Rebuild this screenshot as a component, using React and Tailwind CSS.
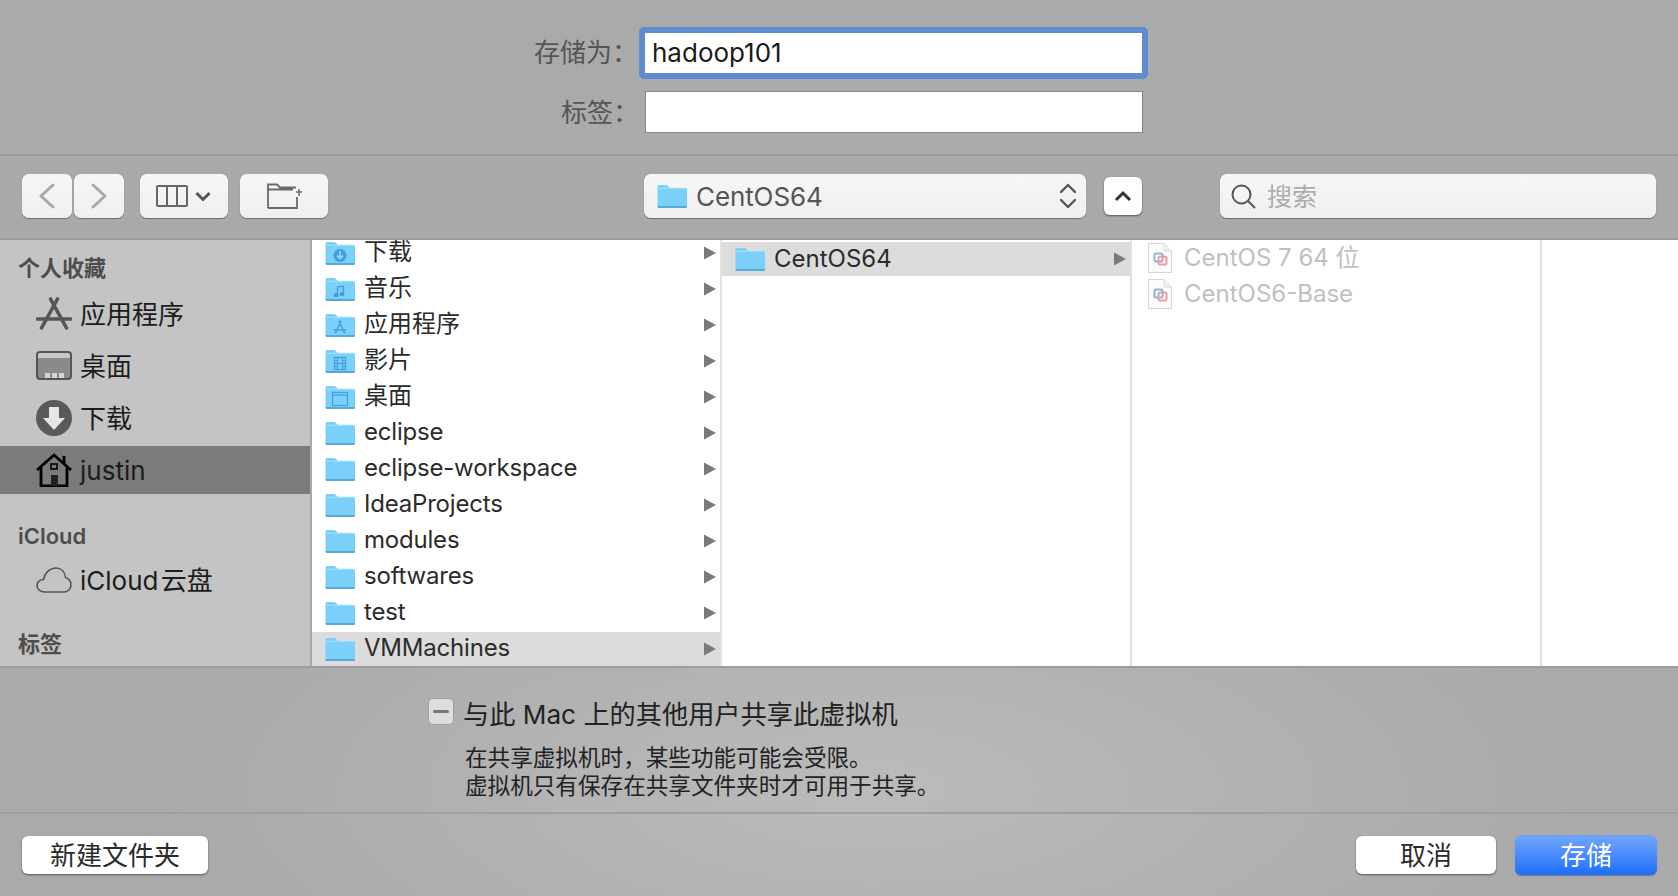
const col1 = [
  ["下载", "download"],
  ["音乐", "music"],
  ["应用程序", "apps"],
  ["影片", "film"],
  ["桌面", "window"],
  ["eclipse"],
  ["eclipse-workspace"],
  ["IdeaProjects"],
  ["modules"],
  ["softwares"],
  ["test"],
  ["VMMachines"],
];

const Glyph = ({ type }) => {
  const c = "#3f9fe0";
  if (type === "download")
    return (
      <g>
        <circle cx="15" cy="14.5" r="6.5" fill={c} />
        <path d="M15 10v7M12 14.5l3 3 3-3" stroke="#8fd6fb" strokeWidth="1.8" fill="none" />
      </g>
    );
  if (type === "music")
    return (
      <g fill="none" stroke={c} strokeWidth="1.4">
        <path d="M12.5 18v-8l6-1v8" />
        <ellipse cx="11" cy="18.2" rx="1.8" ry="1.4" fill={c} />
        <ellipse cx="17" cy="17.2" rx="1.8" ry="1.4" fill={c} />
      </g>
    );
  if (type === "apps")
    return (
      <g fill="none" stroke={c} strokeWidth="1.4" strokeLinecap="round">
        <path d="M14 8l5.500 12M16 8l-5.500 12M9 17h12" />
      </g>
    );
  if (type === "film")
    return (
      <g fill="none" stroke={c} strokeWidth="1.2">
        <rect x="9.5" y="8.5" width="11" height="12" />
        <path d="M12.5 8.5v12M17.5 8.5v12M12.5 14.5h5M9.5 11.5h3M9.5 14.5h3M9.5 17.5h3M17.5 11.5h3M17.5 14.5h3M17.5 17.5h3" />
      </g>
    );
  if (type === "window")
    return (
      <g fill="none" stroke={c} strokeWidth="1.2">
        <rect x="7.5" y="7.5" width="15" height="13" />
        <path d="M7.5 10h15" />
      </g>
    );
  return null;
};

const Folder = ({ glyph }) => (
  <svg width="30" height="24" viewBox="0 0 30 24" className="shrink-0">
    <path d="M0.5 3C0.5 1.5 1 1 2 1h7c1 0 1.5 .5 2.5 1.5S13 4 14 4h14.5c1 0 1.5 .5 1.5 1.5V21.5c0 1-.5 1.5-1.5 1.5H2c-1 0-1.5-.5-1.5-1.5z" fill="#7bd0fa" />
    <path d="M0.5 5.2C0.5 4.6 1 4.2 1.6 4.2H28.6c.8 0 1.4 .4 1.4 1.2" fill="none" stroke="#a9e1fc" strokeWidth="1" />
    <path d="M0.5 22h29.5v1c0 .5-.5 1-1.5 1H2c-1 0-1.5-.5-1.5-1z" fill="#57a9d6" />
    {glyph && <Glyph type={glyph} />}
  </svg>
);

const Arrow = () => (
  <svg width="12" height="14" viewBox="0 0 12 14" className="shrink-0">
    <path d="M0 0.5L12 7L0 13.5z" fill="#7a7a7a" />
  </svg>
);

const VmFile = () => (
  <svg width="24" height="30" viewBox="0 0 24 30" className="shrink-0">
    <path d="M0.5 0.5H16L23.5 8V29.5H0.5z" fill="#fbfbfb" stroke="#d6d6d6" />
    <path d="M16 0.5V8H23.5" fill="#eeeeee" stroke="#dedede" />
    <rect x="6.5" y="10.5" width="8" height="8" rx="1.5" fill="none" stroke="#8db4de" strokeWidth="2" />
    <rect x="10.5" y="13.5" width="8" height="8" rx="1.5" fill="none" stroke="#f59a9a" strokeWidth="2" />
  </svg>
);

const AppsIcon = () => (
  <svg width="36" height="34" viewBox="0 0 36 34" fill="none" stroke="#555555" strokeWidth="3.6" strokeLinecap="round">
    <path d="M14.500 2L30.500 31M21.500 2L5.500 31M1.500 22h33" />
  </svg>
);

const DesktopIcon = () => (
  <svg width="36" height="30" viewBox="0 0 36 30">
    <rect x="1" y="1" width="34" height="27" rx="3" fill="#8a8a8a" stroke="#555555" strokeWidth="2" />
    <path d="M2 7V4c0-1 1-2 2-2h28c1 0 2 1 2 2v3z" fill="#c8c8c8" />
    <rect x="9" y="22" width="5" height="5" fill="#d4d4d4" />
    <rect x="16" y="22" width="5" height="5" fill="#d4d4d4" />
    <rect x="23" y="22" width="5" height="5" fill="#d4d4d4" />
  </svg>
);

const DownloadIcon = () => (
  <svg width="36" height="36" viewBox="0 0 36 36">
    <circle cx="18" cy="18" r="18" fill="#5a5a5a" />
    <path d="M13 7h10v11h6L18 30 7 18h6z" fill="#e6e6e6" />
  </svg>
);

const HomeIcon = () => (
  <svg width="36" height="34" viewBox="0 0 36 34" fill="none" stroke="#000000" strokeWidth="2.8">
    <path d="M1 17L18 2l17 15" />
    <path d="M28 3v8" />
    <path d="M5 14v19h26V14" />
    <rect x="15" y="11" width="6" height="5" strokeWidth="1.6" />
    <rect x="15" y="22" width="7" height="11" fill="#222222" stroke="none" />
  </svg>
);

const CloudIcon = () => (
  <svg width="36" height="26" viewBox="0 0 36 26" fill="none" stroke="#555555" strokeWidth="1.6">
    <path d="M9 25C4 25 1 22 1 18.500C1 15 4 12.500 7.500 12.500C8.500 6 13.500 1 20 1C25.500 1 29 5 29.500 10.500C33 11.500 35 14.500 35 18C35 22 32 25 28 25z" />
  </svg>
);

const SideRow = ({ icon, label, active }) => (
  <div className={`flex items-center h-[48px] pl-[36px] ${active ? "bg-[#7b7b7b]" : ""}`}>
    <div className="w-[36px] flex justify-center shrink-0">{icon}</div>
    <span className="ml-[8px] pt-[2px] text-[26px] text-[#1c1c1c] leading-none">{label}</span>
  </div>
);

const SideHeader = ({ children, className }) => (
  <div className={`flex items-center pl-[18px] text-[22px] font-semibold text-[#4d4d4d] h-[40px] ${className}`}>
    {children}
  </div>
);

const ToolButton = ({ className, children }) => (
  <div className={`flex items-center h-[44px] rounded-[7px] bg-gradient-to-b from-[#f7f7f7] to-[#efefef] shadow-[0_1px_1px_rgba(0,0,0,0.35)] ${className}`}>
    {children}
  </div>
);

const PushButton = ({ className, children }) => (
  <button className={`flex items-center justify-center h-[38px] rounded-[6px] bg-white text-[26px] text-[#2b2b2b] shadow-[0_1px_2px_rgba(0,0,0,0.5)] ${className}`}>
    {children}
  </button>
);

export default function App() {
  return (
    <div className="w-[1678px] h-[896px] overflow-hidden flex flex-col bg-[radial-gradient(ellipse_700px_260px_at_52%_88%,#bbbbbb,#aaaaaa)] font-['Inter','Noto_Sans_CJK_SC',sans-serif]">
      {/* name + tags */}
      <div className="h-[156px] shrink-0 border-b-2 border-[#9c9c9c] pt-[27px] bg-[#aaaaaa]">
        <div className="flex items-center">
          <div className="w-[639px] pr-[1px] pb-[2px] text-right text-[26px] text-[#555555]">存储为：</div>
          <div className="w-[509px] h-[52px] rounded-[5px] border-[6px] border-[#5e8bd1] bg-white flex items-center pl-[7px] pb-[2px] text-[26px] text-[#1a1a1a]">
            hadoop101
          </div>
        </div>
        <div className="flex items-center mt-[12px]">
          <div className="w-[639px] text-right text-[26px] text-[#555555]">标签：</div>
          <div className="ml-[6px] w-[498px] h-[42px] border border-[#858585] bg-white" />
        </div>
      </div>

      {/* toolbar */}
      <div className="h-[84px] shrink-0 border-b-2 border-[#9c9c9c] pt-[18px] pl-[22px] flex items-start bg-[#a9a9a9]">
        <ToolButton className="w-[50px] justify-center">
          <svg width="16" height="26" viewBox="0 0 16 26" fill="none" stroke="#a8a8a8" strokeWidth="3" strokeLinecap="round" strokeLinejoin="round">
            <path d="M14 2L2 13l12 11" />
          </svg>
        </ToolButton>
        <ToolButton className="w-[50px] ml-[2px] justify-center">
          <svg width="16" height="26" viewBox="0 0 16 26" fill="none" stroke="#a8a8a8" strokeWidth="3" strokeLinecap="round" strokeLinejoin="round">
            <path d="M2 2l12 11L2 24" />
          </svg>
        </ToolButton>
        <ToolButton className="w-[88px] ml-[16px] pl-[16px]">
          <svg width="32" height="22" viewBox="0 0 32 22" fill="none" stroke="#666666" strokeWidth="2">
            <rect x="1" y="1" width="30" height="20" rx="1" />
            <path d="M11 1v20M21 1v20" />
          </svg>
          <svg width="16" height="11" viewBox="0 0 16 11" fill="none" stroke="#555555" strokeWidth="3" className="ml-[7px]">
            <path d="M1.500 2L8 8.500 14.500 2" />
          </svg>
        </ToolButton>
        <ToolButton className="w-[88px] ml-[12px] justify-center">
          <svg width="36" height="26" viewBox="0 0 36 26" fill="none" stroke="#6a6a6a" strokeWidth="1.8" className="ml-[1px]">
            <path d="M1 25V1.500h9l3 3h16M1 25h29V14M1 6.500h25" />
            <path d="M29 9h6M32 6v7" strokeWidth="1.5" />
          </svg>
        </ToolButton>
        <ToolButton className="w-[442px] ml-[316px] pl-[13px] pr-[9px]">
          <Folder />
          <span className="ml-[9px] pt-[2px] text-[26px] tracking-[-0.1px] text-[#555555] leading-none">CentOS64</span>
          <svg width="18" height="28" viewBox="0 0 18 28" fill="none" stroke="#555555" strokeWidth="2.4" strokeLinecap="round" strokeLinejoin="round" className="ml-auto">
            <path d="M2 10l7-7 7 7M2 18l7 7 7-7" />
          </svg>
        </ToolButton>
        <div className="flex items-center justify-center w-[38px] h-[38px] mt-[3px] ml-[18px] rounded-[6px] bg-white shadow-[0_1px_2px_rgba(0,0,0,0.5)]">
          <svg width="18" height="12" viewBox="0 0 18 12" fill="none" stroke="#333333" strokeWidth="3">
            <path d="M2 10l7-7 7 7" />
          </svg>
        </div>
        <ToolButton className="w-[436px] ml-[78px] pl-[11px]">
          <svg width="25" height="25" viewBox="0 0 25 25" fill="none" stroke="#555555" strokeWidth="2">
            <circle cx="10.500" cy="10.500" r="9" />
            <path d="M17 17l7 7" />
          </svg>
          <span className="ml-[11px] pt-[2px] text-[25px] text-[#acacac] leading-none">搜索</span>
        </ToolButton>
      </div>

      {/* browser */}
      <div className="h-[426px] shrink-0 flex">
        <div className="w-[312px] shrink-0 bg-[#c4c4c4] border-r-2 border-[#a9a9a9] overflow-hidden">
          <SideHeader className="h-[50px] pt-[6px]">个人收藏</SideHeader>
          <div className="flex flex-col gap-[4px]">
            <SideRow icon={<AppsIcon />} label="应用程序" />
            <SideRow icon={<DesktopIcon />} label="桌面" />
            <SideRow icon={<DownloadIcon />} label="下载" />
            <SideRow icon={<HomeIcon />} label="justin" active />
          </div>
          <SideHeader className="mt-[22px]">iCloud</SideHeader>
          <SideRow icon={<CloudIcon />} label={"iCloud\u200A云盘"} />
          <SideHeader className="mt-[20px]">标签</SideHeader>
        </div>

        <div className="w-[408px] shrink-0 bg-white overflow-hidden">
          <div className="-mt-[4px] flex flex-col gap-[2px]">
            {col1.map(([name, glyph]) => (
              <div
                key={name}
                className={`flex items-center h-[34px] shrink-0 pl-[13px] pr-[4px] ${name === "VMMachines" ? "bg-[#dcdcdc]" : ""}`}
              >
                <Folder glyph={glyph} />
                <span className={`ml-[9px] pb-[2px] text-[24px] text-[#2b2b2b] leading-none ${glyph ? "" : "tracking-[-0.2px]"}`}>{name}</span>
                <span className="ml-auto">
                  <Arrow />
                </span>
              </div>
            ))}
          </div>
        </div>

        <div className="w-[412px] shrink-0 bg-white border-x-2 border-[#e2e2e2] pt-[2px]">
          <div className="flex items-center h-[34px] bg-[#dcdcdc] pl-[13px] pr-[4px]">
            <Folder />
            <span className="ml-[9px] text-[24px] text-[#2b2b2b] leading-none">CentOS64</span>
            <span className="ml-auto">
              <Arrow />
            </span>
          </div>
        </div>

        <div className="w-[410px] shrink-0 bg-white border-r-2 border-[#e2e2e2] pt-[1px] flex flex-col gap-[2px]">
          {["CentOS 7 64 位", "CentOS6-Base"].map((name) => (
            <div key={name} className="flex items-center h-[34px] pl-[16px]">
              <VmFile />
              <span className="ml-[12px] text-[24px] text-[#c0c0c0] leading-none">{name}</span>
            </div>
          ))}
        </div>

        <div className="flex-1 bg-white" />
      </div>

      {/* share option */}
      <div className="h-[148px] shrink-0 border-t-2 border-b-2 border-t-[#9c9c9c] border-b-[#9f9f9f] pt-[30px] pl-[428px]">
        <div className="flex items-start">
          <div className="w-[26px] h-[27px] rounded-[5px] border border-[#a0a0a0] bg-[#dddddd] flex items-center justify-center">
            <div className="w-[16px] h-[3px] rounded-full bg-[#777777]" />
          </div>
          <span className="ml-[9px] text-[26.2px] leading-[34px] text-[#222222]">与此 Mac 上的其他用户共享此虚拟机</span>
        </div>
        <div className="mt-[12px] ml-[37px] text-[22.6px] leading-[28px] text-[#222222]">
          <div>在共享虚拟机时，某些功能可能会受限。</div>
          <div>虚拟机只有保存在共享文件夹时才可用于共享。</div>
        </div>
      </div>

      {/* footer */}
      <div className="flex-1 flex items-center pl-[22px] pr-[21px]">
        <PushButton className="w-[186px]">新建文件夹</PushButton>
        <PushButton className="w-[140px] ml-auto">取消</PushButton>
        <button className="flex items-center justify-center w-[142px] h-[40px] ml-[19px] rounded-[6px] bg-gradient-to-b from-[#72a6fb] to-[#186dfb] text-[26px] text-white shadow-[0_1px_1px_rgba(0,0,0,0.3)]">
          存储
        </button>
      </div>
    </div>
  );
}
